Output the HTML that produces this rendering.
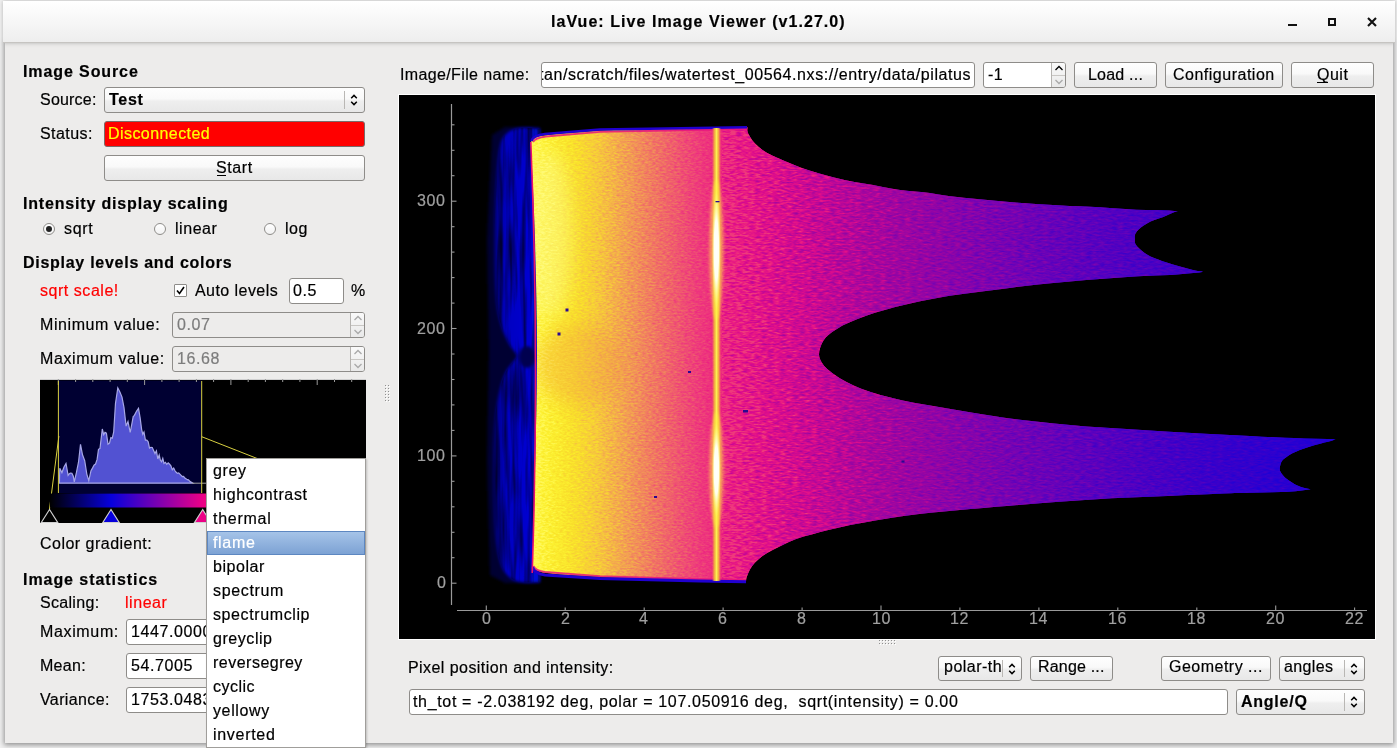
<!DOCTYPE html>
<html><head><meta charset="utf-8">
<style>
*{margin:0;padding:0;box-sizing:border-box}
html,body{width:1397px;height:748px;overflow:hidden;background:#f0f0f0;position:relative}
body{font-family:"Liberation Sans",sans-serif;font-size:15px;color:#000}
.a{position:absolute}
.t{position:absolute;white-space:pre;will-change:transform;-webkit-text-stroke:0.2px currentColor;font-family:"Liberation Sans",sans-serif}
.btn{position:absolute;border:1px solid #8e8c89;border-radius:3px;background:linear-gradient(#fefefe 0%,#f9f9f9 45%,#eeeeee 55%,#e8e8e8 100%)}
.inp{position:absolute;border:1px solid #8e8c89;border-radius:3px;background:#fff}
.dis{background:#edeceb}
</style></head><body>

<div class="a" style="left:5px;top:42px;width:1388px;height:701px;background:#edeceb;box-shadow:0 1px 5px 1px rgba(0,0,0,0.4)"></div>
<div class="a" style="left:3px;top:1px;width:1392px;height:42px;background:linear-gradient(#ffffff,#eeeeee);border-bottom:1px solid #c6c4c1;box-shadow:0 0 4px rgba(0,0,0,0.25)"></div>
<div class="t" style="left:551.0px;top:13.9px;font-size:16.0px;line-height:16.0px;letter-spacing:1.056px;font-weight:bold;">laVue: Live Image Viewer (v1.27.0)</div>
<div class="a" style="left:1288px;top:24px;width:9px;height:2px;background:#111"></div>
<div class="a" style="left:1328px;top:18px;width:8px;height:8px;border:2px solid #111"></div>
<svg class="a" style="left:1367px;top:17px" width="10" height="10" viewBox="0 0 10 10"><path d="M1 1L9 9M9 1L1 9" stroke="#111" stroke-width="2.1"/></svg>
<div class="t" style="left:23.0px;top:63.5px;font-size:16.0px;line-height:16.0px;letter-spacing:0.899px;font-weight:bold;">Image Source</div>
<div class="t" style="left:40.0px;top:91.5px;font-size:16.0px;line-height:16.0px;letter-spacing:0.205px;">Source:</div>
<div class="btn" style="left:104px;top:87px;width:261px;height:26px;"></div>
<div class="a" style="left:344px;top:91px;width:1px;height:18px;background:#b9b7b4"></div>
<svg class="a" style="left:350.0px;top:92.0px" width="8" height="16" viewBox="0 0 8 16"><path d="M1.2 6.2 L4 3.4 L6.8 6.2 M1.2 9.8 L4 12.6 L6.8 9.8" fill="none" stroke="#000" stroke-width="1.5"/></svg>
<div class="t" style="left:109.0px;top:91.5px;font-size:16.0px;line-height:16.0px;letter-spacing:0.700px;font-weight:bold;">Test</div>
<div class="t" style="left:40.0px;top:125.5px;font-size:16.0px;line-height:16.0px;letter-spacing:0.435px;">Status:</div>
<div class="inp" style="left:104px;top:121px;width:261px;height:26px;background:#ff0000;border-color:#7a6a6a"></div>
<div class="t" style="left:108.0px;top:125.5px;font-size:16.0px;line-height:16.0px;letter-spacing:0.428px;color:#ffff00;">Disconnected</div>
<div class="btn" style="left:104px;top:155px;width:261px;height:26px;"></div>
<div class="t" style="left:216.2px;top:159.5px;font-size:16.0px;line-height:16.0px;letter-spacing:0.571px;">Start</div>
<div class="a" style="left:217px;top:175px;width:9px;height:1px;background:#000"></div>
<div class="t" style="left:23.0px;top:195.5px;font-size:16.0px;line-height:16.0px;letter-spacing:0.823px;font-weight:bold;">Intensity display scaling</div>
<div class="a" style="left:42.5px;top:223px;width:12px;height:12px;border-radius:50%;border:1px solid #8e8c89;background:linear-gradient(#fff,#f2f2f2)"></div>
<div class="a" style="left:45.5px;top:226px;width:6px;height:6px;border-radius:50%;background:#222"></div>
<div class="t" style="left:64.0px;top:220.5px;font-size:16.0px;line-height:16.0px;letter-spacing:0.678px;">sqrt</div>
<div class="a" style="left:153.5px;top:223px;width:12px;height:12px;border-radius:50%;border:1px solid #8e8c89;background:linear-gradient(#fff,#f2f2f2)"></div>
<div class="t" style="left:175.0px;top:220.5px;font-size:16.0px;line-height:16.0px;letter-spacing:0.549px;">linear</div>
<div class="a" style="left:263.5px;top:223px;width:12px;height:12px;border-radius:50%;border:1px solid #8e8c89;background:linear-gradient(#fff,#f2f2f2)"></div>
<div class="t" style="left:285.0px;top:220.5px;font-size:16.0px;line-height:16.0px;letter-spacing:0.505px;">log</div>
<div class="t" style="left:23.0px;top:254.5px;font-size:16.0px;line-height:16.0px;letter-spacing:0.726px;font-weight:bold;">Display levels and colors</div>
<div class="t" style="left:40.0px;top:282.5px;font-size:16.0px;line-height:16.0px;letter-spacing:0.537px;color:#ff0000;">sqrt scale!</div>
<div class="inp" style="left:174px;top:284px;width:13px;height:13px;border-radius:1px"></div>
<svg class="a" style="left:174px;top:284px" width="13" height="13" viewBox="0 0 13 13"><path d="M3 6.5L5.5 9.5L10 3" fill="none" stroke="#000" stroke-width="1.6"/></svg>
<div class="t" style="left:195.0px;top:282.5px;font-size:16.0px;line-height:16.0px;letter-spacing:0.438px;">Auto levels</div>
<div class="inp" style="left:289px;top:278px;width:55px;height:26px;"></div>
<div class="t" style="left:293.0px;top:282.5px;font-size:16.0px;line-height:16.0px;letter-spacing:0.538px;">0.5</div>
<div class="t" style="left:351.0px;top:282.5px;font-size:16.0px;line-height:16.0px;letter-spacing:0.027px;">%</div>
<div class="t" style="left:40.0px;top:316.5px;font-size:16.0px;line-height:16.0px;letter-spacing:0.591px;">Minimum value:</div>
<div class="inp dis" style="left:172px;top:312px;width:193px;height:26px;"></div>
<div class="a" style="left:350px;top:313px;width:14px;height:24px;background:linear-gradient(#fafafa,#e9e9e9);border-left:1px solid #b5b3b0;border-radius:0 2px 2px 0"></div>
<div class="a" style="left:351px;top:325px;width:13px;height:1px;background:#c9c7c4"></div>
<svg class="a" style="left:352.5px;top:312px" width="10" height="26" viewBox="0 0 10 26"><path d="M1.5 8.0 L5 4.5 L8.5 8.0" fill="none" stroke="#a9a9a9" stroke-width="1.3"/><path d="M1.5 18.0 L5 21.5 L8.5 18.0" fill="none" stroke="#a9a9a9" stroke-width="1.3"/></svg>
<div class="t" style="left:177.0px;top:316.5px;font-size:16.0px;line-height:16.0px;letter-spacing:0.564px;color:#7c7c7c;">0.07</div>
<div class="t" style="left:40.0px;top:350.5px;font-size:16.0px;line-height:16.0px;letter-spacing:0.588px;">Maximum value:</div>
<div class="inp dis" style="left:172px;top:346px;width:193px;height:26px;"></div>
<div class="a" style="left:350px;top:347px;width:14px;height:24px;background:linear-gradient(#fafafa,#e9e9e9);border-left:1px solid #b5b3b0;border-radius:0 2px 2px 0"></div>
<div class="a" style="left:351px;top:359px;width:13px;height:1px;background:#c9c7c4"></div>
<svg class="a" style="left:352.5px;top:346px" width="10" height="26" viewBox="0 0 10 26"><path d="M1.5 8.0 L5 4.5 L8.5 8.0" fill="none" stroke="#a9a9a9" stroke-width="1.3"/><path d="M1.5 18.0 L5 21.5 L8.5 18.0" fill="none" stroke="#a9a9a9" stroke-width="1.3"/></svg>
<div class="t" style="left:177.0px;top:350.5px;font-size:16.0px;line-height:16.0px;letter-spacing:0.581px;color:#7c7c7c;">16.68</div>
<div class="t" style="left:40.0px;top:535.5px;font-size:16.0px;line-height:16.0px;letter-spacing:0.482px;">Color gradient:</div>
<div class="t" style="left:23.0px;top:571.5px;font-size:16.0px;line-height:16.0px;letter-spacing:0.938px;font-weight:bold;">Image statistics</div>
<div class="t" style="left:40.0px;top:594.5px;font-size:16.0px;line-height:16.0px;letter-spacing:0.307px;">Scaling:</div>
<div class="t" style="left:125.0px;top:594.5px;font-size:16.0px;line-height:16.0px;letter-spacing:0.549px;color:#ff0000;">linear</div>
<div class="t" style="left:40.0px;top:623.5px;font-size:16.0px;line-height:16.0px;letter-spacing:0.648px;">Maximum:</div>
<div class="inp" style="left:126px;top:619px;width:239px;height:26px;"></div>
<div class="t" style="left:130.5px;top:623.5px;font-size:16.0px;line-height:16.0px;letter-spacing:0.609px;">1447.0000</div>
<div class="t" style="left:40.0px;top:657.5px;font-size:16.0px;line-height:16.0px;letter-spacing:0.291px;">Mean:</div>
<div class="inp" style="left:126px;top:653px;width:239px;height:26px;"></div>
<div class="t" style="left:130.5px;top:657.5px;font-size:16.0px;line-height:16.0px;letter-spacing:0.599px;">54.7005</div>
<div class="t" style="left:40.0px;top:691.5px;font-size:16.0px;line-height:16.0px;letter-spacing:0.383px;">Variance:</div>
<div class="inp" style="left:126px;top:687px;width:239px;height:26px;"></div>
<div class="t" style="left:130.5px;top:691.5px;font-size:16.0px;line-height:16.0px;letter-spacing:0.609px;">1753.0483</div>
<div class="t" style="left:399.5px;top:66.8px;font-size:16.0px;line-height:16.0px;letter-spacing:0.368px;">Image/File name:</div>
<div class="inp" style="left:541px;top:62px;width:434px;height:26px;overflow:hidden"></div>
<div class="a" style="left:542px;top:63px;width:432px;height:24px;overflow:hidden">
<div class="t" style="left:-3.5px;top:3.8px;font-size:16.0px;line-height:16.0px;letter-spacing:0.581px;">tan/scratch/files/watertest_00564.nxs://entry/data/pilatus</div>
</div>
<div class="inp" style="left:983px;top:62px;width:83px;height:26px;"></div>
<div class="a" style="left:1051px;top:63px;width:14px;height:24px;background:linear-gradient(#fafafa,#e9e9e9);border-left:1px solid #b5b3b0;border-radius:0 2px 2px 0"></div>
<div class="a" style="left:1052px;top:75px;width:13px;height:1px;background:#c9c7c4"></div>
<svg class="a" style="left:1053.5px;top:62px" width="10" height="26" viewBox="0 0 10 26"><path d="M1.5 8.0 L5 4.5 L8.5 8.0" fill="none" stroke="#000" stroke-width="1.3"/><path d="M1.5 18.0 L5 21.5 L8.5 18.0" fill="none" stroke="#a9a9a9" stroke-width="1.3"/></svg>
<div class="t" style="left:988.0px;top:66.5px;font-size:16.0px;line-height:16.0px;letter-spacing:0.365px;">-1</div>
<div class="btn" style="left:1074px;top:62px;width:83px;height:26px;"></div>
<div class="t" style="left:1088.0px;top:66.5px;font-size:16.0px;line-height:16.0px;letter-spacing:0.210px;">Load ...</div>
<div class="btn" style="left:1165px;top:62px;width:118px;height:26px;"></div>
<div class="t" style="left:1173.1px;top:66.5px;font-size:16.0px;line-height:16.0px;letter-spacing:0.504px;">Configuration</div>
<div class="btn" style="left:1291px;top:62px;width:83px;height:26px;"></div>
<div class="t" style="left:1316.8px;top:66.5px;font-size:16.0px;line-height:16.0px;letter-spacing:0.505px;">Quit</div>
<div class="a" style="left:1317px;top:82px;width:11px;height:1px;background:#000"></div>
<div class="t" style="left:408.3px;top:659.5px;font-size:16.0px;line-height:16.0px;letter-spacing:0.435px;">Pixel position and intensity:</div>
<div class="btn" style="left:938px;top:656px;width:84px;height:25px;"></div>
<div class="a" style="left:1002px;top:660px;width:1px;height:17px;background:#b9b7b4"></div>
<svg class="a" style="left:1007.5px;top:660.5px" width="8" height="16" viewBox="0 0 8 16"><path d="M1.2 6.2 L4 3.4 L6.8 6.2 M1.2 9.8 L4 12.6 L6.8 9.8" fill="none" stroke="#000" stroke-width="1.5"/></svg>
<div class="t" style="left:943.5px;top:659.0px;font-size:16.0px;line-height:16.0px;letter-spacing:0.477px;">polar-th</div>
<div class="btn" style="left:1030px;top:656px;width:83px;height:25px;"></div>
<div class="t" style="left:1038.2px;top:659.0px;font-size:16.0px;line-height:16.0px;letter-spacing:0.187px;">Range ...</div>
<div class="btn" style="left:1161px;top:656px;width:110px;height:25px;"></div>
<div class="t" style="left:1169.1px;top:659.0px;font-size:16.0px;line-height:16.0px;letter-spacing:0.487px;">Geometry ...</div>
<div class="btn" style="left:1279px;top:656px;width:86px;height:25px;"></div>
<div class="a" style="left:1344px;top:660px;width:1px;height:17px;background:#b9b7b4"></div>
<svg class="a" style="left:1350.0px;top:660.5px" width="8" height="16" viewBox="0 0 8 16"><path d="M1.2 6.2 L4 3.4 L6.8 6.2 M1.2 9.8 L4 12.6 L6.8 9.8" fill="none" stroke="#000" stroke-width="1.5"/></svg>
<div class="t" style="left:1284.4px;top:659.0px;font-size:16.0px;line-height:16.0px;letter-spacing:0.380px;">angles</div>
<div class="inp" style="left:409px;top:689px;width:819px;height:26px;"></div>
<div class="t" style="left:413.3px;top:693.5px;font-size:16.0px;line-height:16.0px;letter-spacing:0.660px;">th_tot = -2.038192 deg, polar = 107.050916 deg,  sqrt(intensity) = 0.00</div>
<div class="btn" style="left:1236px;top:689px;width:129px;height:26px;"></div>
<div class="a" style="left:1344px;top:693px;width:1px;height:18px;background:#b9b7b4"></div>
<svg class="a" style="left:1350.0px;top:694.0px" width="8" height="16" viewBox="0 0 8 16"><path d="M1.2 6.2 L4 3.4 L6.8 6.2 M1.2 9.8 L4 12.6 L6.8 9.8" fill="none" stroke="#000" stroke-width="1.5"/></svg>
<div class="t" style="left:1241.4px;top:693.5px;font-size:16.0px;line-height:16.0px;letter-spacing:0.748px;font-weight:bold;">Angle/Q</div>
<div class="a" style="left:398px;top:94px;width:978px;height:546px;background:#fff"></div>
<div class="a" style="left:399px;top:95px;width:976px;height:544px;background:#000"></div>
<svg class="a" style="left:399px;top:95px" width="976" height="544" viewBox="0 0 976 544">
<defs>
<linearGradient id="hg" gradientUnits="userSpaceOnUse" x1="131" y1="0" x2="941" y2="0">
<stop offset="0.0000" stop-color="#fff858"/>
<stop offset="0.0247" stop-color="#fcf030"/>
<stop offset="0.0543" stop-color="#f9e02a"/>
<stop offset="0.0840" stop-color="#f6c83c"/>
<stop offset="0.1235" stop-color="#f29a55"/>
<stop offset="0.1667" stop-color="#f06868"/>
<stop offset="0.2099" stop-color="#ee3a7c"/>
<stop offset="0.2469" stop-color="#ec2080"/>
<stop offset="0.3086" stop-color="#dc0c8c"/>
<stop offset="0.3704" stop-color="#c00896"/>
<stop offset="0.4321" stop-color="#a4069e"/>
<stop offset="0.5185" stop-color="#8c04a8"/>
<stop offset="0.5802" stop-color="#7803b2"/>
<stop offset="0.7037" stop-color="#5801be"/>
<stop offset="0.8272" stop-color="#3c00c8"/>
<stop offset="1.0000" stop-color="#2000d4"/>
</linearGradient>
<linearGradient id="hg2" gradientUnits="userSpaceOnUse" x1="131" y1="0" x2="941" y2="0">
<stop offset="0.2099" stop-color="#ee3a7c"/>
<stop offset="0.2469" stop-color="#ec2080"/>
<stop offset="0.3086" stop-color="#dc0c8c"/>
<stop offset="0.3704" stop-color="#c00896"/>
<stop offset="0.4321" stop-color="#a4069e"/>
<stop offset="0.5185" stop-color="#8c04a8"/>
<stop offset="0.5802" stop-color="#7803b2"/>
<stop offset="0.7037" stop-color="#5801be"/>
<stop offset="0.8272" stop-color="#3c00c8"/>
<stop offset="1.0000" stop-color="#2000d4"/>
</linearGradient>
<linearGradient id="bg1" gradientUnits="userSpaceOnUse" x1="87" y1="0" x2="137" y2="0"><stop offset="0.1" stop-color="#000048"/><stop offset="0.22" stop-color="#000090"/><stop offset="0.4" stop-color="#0000c0"/><stop offset="0.75" stop-color="#0004cc"/><stop offset="1" stop-color="#0008d8"/></linearGradient>
<radialGradient id="spot1" cx="0.5" cy="0.5" r="0.5"><stop offset="0" stop-color="#ffffff"/><stop offset="0.5" stop-color="#fffff0"/><stop offset="1" stop-color="#ffff80" stop-opacity="0"/></radialGradient>
<linearGradient id="vl" x1="0" y1="0" x2="1" y2="0"><stop offset="0" stop-color="#f0a040" stop-opacity="0"/><stop offset="0.25" stop-color="#f4b838" stop-opacity="0.85"/><stop offset="0.5" stop-color="#fbf050"/><stop offset="0.75" stop-color="#f4b838" stop-opacity="0.85"/><stop offset="1" stop-color="#f0a040" stop-opacity="0"/></linearGradient>
<filter id="nz" x="0" y="0" width="100%" height="100%" color-interpolation-filters="sRGB"><feTurbulence type="fractalNoise" baseFrequency="0.28 0.6" numOctaves="2" seed="7" result="n"/><feColorMatrix in="n" type="matrix" values="1 0 0 0 0  0 0 0 0 0.5  0 0 0 0 0  0 0 0 0 1" result="m"/><feDisplacementMap in="SourceGraphic" in2="m" scale="70" xChannelSelector="R" yChannelSelector="G"/></filter>
<clipPath id="shp"><polygon points="131.8,48.0 133.5,43.5 141.0,41.0 161.0,38.5 201.0,35.5 251.0,33.8 348.5,32.2 348.4,33.5 348.3,35.4 348.9,37.9 350.6,41.1 353.0,45.0 356.0,48.6 359.5,51.8 363.5,54.9 368.2,57.9 373.7,60.8 379.9,63.6 386.8,66.5 394.1,69.5 402.1,72.7 411.2,75.8 422.1,79.1 434.1,82.3 445.5,85.1 455.5,87.1 464.8,88.6 474.2,90.1 483.8,91.9 493.3,93.7 502.8,95.2 512.6,96.3 522.3,97.1 531.0,98.0 536.7,98.9 541.3,99.8 549.7,101.0 564.6,102.7 583.2,104.6 601.8,106.3 619.4,107.7 637.0,108.9 654.0,110.0 670.5,110.9 686.3,111.6 701.0,112.3 714.2,113.2 726.2,114.0 737.1,114.7 747.1,115.0 755.9,115.1 763.6,115.3 770.1,115.6 775.4,116.0 779.0,116.2 777.6,116.6 775.6,117.1 773.2,118.0 770.4,119.3 767.1,120.8 763.6,122.3 759.7,123.6 755.4,125.0 751.5,126.5 748.0,128.4 744.7,130.4 741.9,132.5 739.6,134.5 737.8,136.6 736.5,138.5 735.9,140.1 735.8,141.7 735.9,143.3 735.8,145.2 735.8,147.2 736.5,149.3 738.2,151.5 740.5,153.8 743.1,156.0 745.6,157.9 748.4,159.7 751.5,161.4 755.1,163.0 759.2,164.6 763.6,166.2 768.5,167.8 773.9,169.4 779.2,171.0 784.7,172.6 790.2,174.0 794.9,175.2 798.7,175.9 801.8,176.2 803.9,176.4 803.7,176.6 803.1,177.0 800.4,177.4 794.3,178.0 786.1,178.8 778.0,179.4 770.7,179.9 763.5,180.3 756.4,180.6 750.4,180.8 744.4,181.0 735.4,181.5 721.4,182.5 704.4,183.7 687.3,185.1 670.8,186.5 654.3,187.9 639.0,189.4 626.0,190.9 614.2,192.5 601.0,194.3 584.9,196.2 567.4,198.4 550.7,200.7 535.5,203.4 521.2,206.3 508.0,209.2 496.3,212.0 485.7,214.9 475.9,217.8 466.5,220.9 457.9,224.2 450.2,227.4 443.5,230.6 437.9,233.9 433.1,237.0 429.4,239.9 426.7,242.6 424.5,245.6 422.6,249.1 421.2,252.8 420.3,256.3 420.0,259.3 420.3,262.0 421.3,264.8 422.9,267.8 425.2,271.0 428.8,274.5 434.2,278.7 440.8,283.2 448.0,287.3 455.2,290.8 462.9,293.9 471.6,296.9 481.5,299.9 492.4,302.8 503.7,305.5 514.9,307.7 526.7,309.7 540.0,311.9 556.0,314.7 573.7,317.8 591.0,320.6 607.2,322.9 623.2,324.9 639.1,326.7 655.2,328.5 671.2,330.1 687.3,331.5 703.3,332.6 719.4,333.5 735.4,334.4 750.7,335.4 766.1,336.4 783.6,337.5 806.2,338.8 830.9,340.1 851.0,341.1 862.4,341.7 869.2,342.0 876.3,342.3 885.6,342.7 895.2,343.1 905.2,343.4 916.7,343.7 928.4,344.0 936.7,344.2 935.7,344.6 934.1,345.3 931.9,346.0 929.0,346.8 925.4,347.6 921.2,348.7 916.1,350.1 910.4,351.8 905.2,353.5 900.8,355.1 896.9,356.7 893.4,358.3 890.4,360.0 887.9,361.7 885.9,363.2 884.5,364.3 883.5,365.3 882.7,366.4 882.0,367.8 881.5,369.4 881.1,371.0 880.8,372.6 880.7,374.2 881.1,376.0 882.2,378.1 883.9,380.3 885.9,382.4 888.2,384.3 890.7,386.1 893.4,387.8 896.1,389.4 899.0,390.8 902.0,392.0 905.5,393.0 909.1,393.7 911.6,394.2 908.0,394.8 902.8,395.6 896.6,396.3 889.7,396.7 881.9,397.0 873.1,397.2 862.5,397.5 850.9,397.8 841.0,398.0 835.7,398.1 832.2,398.2 824.3,398.5 808.6,399.2 788.5,400.1 768.5,401.0 749.9,401.7 731.3,402.4 712.7,403.3 693.7,404.4 674.7,405.7 656.8,407.0 640.6,408.2 625.4,409.5 611.0,410.7 597.4,411.8 584.5,413.0 571.5,414.1 558.2,415.2 544.8,416.4 531.4,417.7 518.1,419.3 504.7,421.1 491.4,423.1 477.7,425.3 463.9,427.7 451.3,430.1 440.3,432.4 430.4,434.8 421.2,437.1 412.6,439.4 404.6,441.6 397.1,444.1 389.9,447.0 383.2,450.2 377.1,453.2 371.8,455.9 367.3,458.4 363.1,461.2 359.3,464.4 355.8,467.8 353.0,471.2 350.8,474.7 349.2,478.2 348.0,481.2 347.3,483.5 347.1,485.3 347.0,486.5 301.0,485.5 251.0,484.0 201.0,482.0 161.0,479.5 144.0,477.5 136.5,475.0 133.4,471.0 133.9,454.2 134.6,430.2 135.3,402.6 136.0,375.0 136.6,347.6 137.3,318.7 137.8,289.2 138.0,260.0 137.8,230.8 137.4,201.4 136.7,172.5 136.0,145.0 135.0,117.2 133.8,89.3 132.6,65.0"/></clipPath>
<filter id="nz3" x="0" y="0" width="100%" height="100%" color-interpolation-filters="sRGB"><feTurbulence type="fractalNoise" baseFrequency="0.5 0.5" numOctaves="1" seed="11" result="n"/><feColorMatrix in="n" type="matrix" values="0 0 0 0 0  0 0 0 0 0  0 0 0 0 0  3 0 0 0 -0.9" result="m"/><feComposite in="SourceGraphic" in2="m" operator="in"/></filter>
<filter id="nzr" x="0" y="0" width="100%" height="100%" color-interpolation-filters="sRGB"><feTurbulence type="fractalNoise" baseFrequency="0.16 0.55" numOctaves="2" seed="21" result="n"/><feColorMatrix in="n" type="matrix" values="1 0 0 0 0  0 0 0 0 0.5  0 0 0 0 0  0 0 0 0 1" result="m"/><feDisplacementMap in="SourceGraphic" in2="m" scale="280" xChannelSelector="R" yChannelSelector="G"/></filter>
<clipPath id="rgt"><rect x="323" y="0" width="976" height="544"/></clipPath>
</defs>
<filter id="bl3" x="-50%" y="-10%" width="200%" height="120%"><feGaussianBlur stdDeviation="1.6"/></filter>
<filter id="nz2" x="0" y="0" width="100%" height="100%" color-interpolation-filters="sRGB"><feTurbulence type="fractalNoise" baseFrequency="0.22 0.015" numOctaves="2" seed="3" result="n"/><feColorMatrix in="n" type="matrix" values="0 0 0 0 0  0 0 0 0 0  0 0 0 0 0  -2.0 0 0 0 1.25"/></filter>
<clipPath id="lobe"><polygon points="141.0,34.0 137.3,33.7 131.9,33.1 126.0,32.8 121.0,33.0 116.9,33.8 113.2,34.9 109.9,36.6 107.0,39.0 104.7,41.5 102.9,44.2 101.4,48.4 100.0,55.0 98.7,65.1 97.6,77.9 96.7,91.7 96.0,105.0 95.5,117.5 95.1,130.0 95.0,142.5 95.0,155.0 95.2,168.1 95.6,181.6 96.2,194.3 97.0,205.0 98.0,213.2 99.2,219.6 100.5,224.9 102.0,230.0 103.6,235.0 105.4,239.5 107.3,243.5 109.0,247.0 110.6,249.9 112.2,252.2 113.7,254.2 115.0,256.0 116.1,257.5 117.1,258.8 117.7,259.8 118.0,261.0 117.8,262.2 117.1,263.2 116.2,264.5 115.0,266.0 113.5,267.8 111.7,269.9 109.8,272.2 108.0,275.0 106.4,278.1 104.9,281.5 103.4,285.4 102.0,290.0 100.6,295.2 99.3,300.9 98.1,307.5 97.0,315.0 96.0,323.2 95.1,332.2 94.4,342.5 94.0,355.0 93.9,371.1 94.0,390.1 94.4,409.0 95.0,425.0 95.9,437.2 97.1,447.3 98.4,455.7 100.0,463.0 101.7,469.0 103.5,473.4 105.6,476.9 108.0,480.0 110.7,482.6 113.8,484.6 117.1,486.0 121.0,487.0 126.0,487.5 131.8,487.4 137.2,487.2 141.0,487.0"/></clipPath>
<polygon points="141.0,32.0 106.0,32.0 93.0,40.0 88.0,145.0 90.0,255.0 88.0,365.0 91.0,480.0 106.0,488.0 141.0,488.0" fill="#000030" filter="url(#bl3)"/>
<polygon points="141.0,34.0 137.3,33.7 131.9,33.1 126.0,32.8 121.0,33.0 116.9,33.8 113.2,34.9 109.9,36.6 107.0,39.0 104.7,41.5 102.9,44.2 101.4,48.4 100.0,55.0 98.7,65.1 97.6,77.9 96.7,91.7 96.0,105.0 95.5,117.5 95.1,130.0 95.0,142.5 95.0,155.0 95.2,168.1 95.6,181.6 96.2,194.3 97.0,205.0 98.0,213.2 99.2,219.6 100.5,224.9 102.0,230.0 103.6,235.0 105.4,239.5 107.3,243.5 109.0,247.0 110.6,249.9 112.2,252.2 113.7,254.2 115.0,256.0 116.1,257.5 117.1,258.8 117.7,259.8 118.0,261.0 117.8,262.2 117.1,263.2 116.2,264.5 115.0,266.0 113.5,267.8 111.7,269.9 109.8,272.2 108.0,275.0 106.4,278.1 104.9,281.5 103.4,285.4 102.0,290.0 100.6,295.2 99.3,300.9 98.1,307.5 97.0,315.0 96.0,323.2 95.1,332.2 94.4,342.5 94.0,355.0 93.9,371.1 94.0,390.1 94.4,409.0 95.0,425.0 95.9,437.2 97.1,447.3 98.4,455.7 100.0,463.0 101.7,469.0 103.5,473.4 105.6,476.9 108.0,480.0 110.7,482.6 113.8,484.6 117.1,486.0 121.0,487.0 126.0,487.5 131.8,487.4 137.2,487.2 141.0,487.0" fill="url(#bg1)" filter="url(#bl3)"/>
<g clip-path="url(#lobe)"><rect x="87" y="31" width="54" height="457" fill="#000040" filter="url(#nz2)" opacity="0.7"/></g>
<ellipse cx="128" cy="262" rx="8" ry="11" fill="#000050" filter="url(#bl3)"/>
<g clip-path="url(#shp)"><rect x="0" y="20" width="976" height="500" fill="url(#hg)" filter="url(#nz)"/><g clip-path="url(#rgt)"><rect x="161" y="20" width="976" height="500" fill="url(#hg2)" filter="url(#nzr)"/></g></g>
<path d="M134 47 Q136 43 147 41.5 L201 36.80000000000001 L348 34" stroke="#e8147e" stroke-width="1.8" fill="none" opacity="0.85"/>
<path d="M132.5 46 Q134 40.5 146 39 L201 34.5 L348 32.3" stroke="#2000d0" stroke-width="2.4" fill="none"/>
<path d="M134.5 471 Q136 475.5 146 477 L201 481.20000000000005 L301 484.20000000000005 L347 485" stroke="#e8147e" stroke-width="2" fill="none" opacity="0.85"/>
<path d="M133.5 472 Q135 478.5 146 480 L201 483.5 L301 486 L347 486.79999999999995" stroke="#2000d0" stroke-width="3" fill="none"/>
<filter id="bl8" x="-100%" y="-50%" width="300%" height="200%"><feGaussianBlur stdDeviation="9"/></filter>
<g clip-path="url(#shp)">
<ellipse cx="151" cy="140" rx="22" ry="85" fill="#ffffd0" opacity="0.3" filter="url(#bl8)"/>
<ellipse cx="181" cy="270" rx="45" ry="40" fill="#f08050" opacity="0.25" filter="url(#bl8)"/>
</g>
<path d="M131.79999999999995 47 Q140.5 260 133.20000000000005 478" stroke="#e8106e" stroke-width="1.6" fill="none"/>
<rect x="313" y="33" width="9" height="453" fill="url(#vl)"/>
<ellipse cx="317.4" cy="155" rx="7" ry="70" fill="#fff040" opacity="0.55" filter="url(#bl3)"/>
<ellipse cx="317.4" cy="375" rx="7" ry="58" fill="#fff040" opacity="0.55" filter="url(#bl3)"/>
<ellipse cx="317.4" cy="155" rx="4.5" ry="60" fill="url(#spot1)"/>
<ellipse cx="317.4" cy="375" rx="4.5" ry="48" fill="url(#spot1)"/>
<rect x="166.5" y="213.5" width="3" height="3" fill="#2a0890"/>
<rect x="158.5" y="237.5" width="3" height="3" fill="#2a0890"/>
<rect x="344" y="315" width="5" height="2.5" fill="#2a0890"/>
<rect x="289" y="276" width="3" height="2" fill="#2a0890"/>
<rect x="255" y="401" width="3" height="2" fill="#2a0890"/>
<rect x="502.5" y="365.5" width="3" height="2" fill="#2a0890"/>
<rect x="316.5" y="106" width="4" height="1.3" fill="#2a0890"/>
<line x1="52.5" y1="9" x2="52.5" y2="510" stroke="#9a9a9a" stroke-width="1.2"/>
<line x1="52.5" y1="488.2" x2="57.5" y2="488.2" stroke="#9a9a9a" stroke-width="1.1"/>
<line x1="52.5" y1="462.7" x2="55.5" y2="462.7" stroke="#9a9a9a" stroke-width="1.1"/>
<line x1="52.5" y1="437.3" x2="55.5" y2="437.3" stroke="#9a9a9a" stroke-width="1.1"/>
<line x1="52.5" y1="411.8" x2="55.5" y2="411.8" stroke="#9a9a9a" stroke-width="1.1"/>
<line x1="52.5" y1="386.3" x2="55.5" y2="386.3" stroke="#9a9a9a" stroke-width="1.1"/>
<line x1="52.5" y1="360.9" x2="57.5" y2="360.9" stroke="#9a9a9a" stroke-width="1.1"/>
<line x1="52.5" y1="335.4" x2="55.5" y2="335.4" stroke="#9a9a9a" stroke-width="1.1"/>
<line x1="52.5" y1="309.9" x2="55.5" y2="309.9" stroke="#9a9a9a" stroke-width="1.1"/>
<line x1="52.5" y1="284.5" x2="55.5" y2="284.5" stroke="#9a9a9a" stroke-width="1.1"/>
<line x1="52.5" y1="259.0" x2="55.5" y2="259.0" stroke="#9a9a9a" stroke-width="1.1"/>
<line x1="52.5" y1="233.5" x2="57.5" y2="233.5" stroke="#9a9a9a" stroke-width="1.1"/>
<line x1="52.5" y1="208.1" x2="55.5" y2="208.1" stroke="#9a9a9a" stroke-width="1.1"/>
<line x1="52.5" y1="182.6" x2="55.5" y2="182.6" stroke="#9a9a9a" stroke-width="1.1"/>
<line x1="52.5" y1="157.1" x2="55.5" y2="157.1" stroke="#9a9a9a" stroke-width="1.1"/>
<line x1="52.5" y1="131.7" x2="55.5" y2="131.7" stroke="#9a9a9a" stroke-width="1.1"/>
<line x1="52.5" y1="106.2" x2="57.5" y2="106.2" stroke="#9a9a9a" stroke-width="1.1"/>
<line x1="52.5" y1="80.7" x2="55.5" y2="80.7" stroke="#9a9a9a" stroke-width="1.1"/>
<line x1="52.5" y1="55.3" x2="55.5" y2="55.3" stroke="#9a9a9a" stroke-width="1.1"/>
<line x1="52.5" y1="29.8" x2="55.5" y2="29.8" stroke="#9a9a9a" stroke-width="1.1"/>
<line x1="58" y1="515.5" x2="968" y2="515.5" stroke="#9a9a9a" stroke-width="1.2"/>
<line x1="87.3" y1="515.5" x2="87.3" y2="510.5" stroke="#9a9a9a" stroke-width="1.1"/>
<line x1="166.2" y1="515.5" x2="166.2" y2="512.5" stroke="#9a9a9a" stroke-width="1.1"/>
<line x1="245.2" y1="515.5" x2="245.2" y2="512.5" stroke="#9a9a9a" stroke-width="1.1"/>
<line x1="324.1" y1="515.5" x2="324.1" y2="512.5" stroke="#9a9a9a" stroke-width="1.1"/>
<line x1="403.1" y1="515.5" x2="403.1" y2="512.5" stroke="#9a9a9a" stroke-width="1.1"/>
<line x1="482.0" y1="515.5" x2="482.0" y2="510.5" stroke="#9a9a9a" stroke-width="1.1"/>
<line x1="560.9" y1="515.5" x2="560.9" y2="512.5" stroke="#9a9a9a" stroke-width="1.1"/>
<line x1="639.9" y1="515.5" x2="639.9" y2="512.5" stroke="#9a9a9a" stroke-width="1.1"/>
<line x1="718.8" y1="515.5" x2="718.8" y2="512.5" stroke="#9a9a9a" stroke-width="1.1"/>
<line x1="797.8" y1="515.5" x2="797.8" y2="512.5" stroke="#9a9a9a" stroke-width="1.1"/>
<line x1="876.7" y1="515.5" x2="876.7" y2="510.5" stroke="#9a9a9a" stroke-width="1.1"/>
<line x1="955.6" y1="515.5" x2="955.6" y2="512.5" stroke="#9a9a9a" stroke-width="1.1"/>
</svg>
<div class="t" style="left:436.5px;top:575.2px;font-size:16.0px;line-height:16.0px;letter-spacing:0.645px;color:#a0a0a0;">0</div>
<div class="t" style="left:417.4px;top:447.8px;font-size:16.0px;line-height:16.0px;letter-spacing:0.645px;color:#a0a0a0;">100</div>
<div class="t" style="left:417.4px;top:320.5px;font-size:16.0px;line-height:16.0px;letter-spacing:0.645px;color:#a0a0a0;">200</div>
<div class="t" style="left:417.4px;top:193.2px;font-size:16.0px;line-height:16.0px;letter-spacing:0.645px;color:#a0a0a0;">300</div>
<div class="t" style="left:481.5px;top:610.5px;font-size:16.0px;line-height:16.0px;letter-spacing:0.645px;color:#a0a0a0;">0</div>
<div class="t" style="left:560.5px;top:610.5px;font-size:16.0px;line-height:16.0px;letter-spacing:0.645px;color:#a0a0a0;">2</div>
<div class="t" style="left:639.4px;top:610.5px;font-size:16.0px;line-height:16.0px;letter-spacing:0.645px;color:#a0a0a0;">4</div>
<div class="t" style="left:718.3px;top:610.5px;font-size:16.0px;line-height:16.0px;letter-spacing:0.645px;color:#a0a0a0;">6</div>
<div class="t" style="left:797.3px;top:610.5px;font-size:16.0px;line-height:16.0px;letter-spacing:0.645px;color:#a0a0a0;">8</div>
<div class="t" style="left:871.5px;top:610.5px;font-size:16.0px;line-height:16.0px;letter-spacing:0.645px;color:#a0a0a0;">10</div>
<div class="t" style="left:950.4px;top:610.5px;font-size:16.0px;line-height:16.0px;letter-spacing:0.645px;color:#a0a0a0;">12</div>
<div class="t" style="left:1029.3px;top:610.5px;font-size:16.0px;line-height:16.0px;letter-spacing:0.645px;color:#a0a0a0;">14</div>
<div class="t" style="left:1108.3px;top:610.5px;font-size:16.0px;line-height:16.0px;letter-spacing:0.645px;color:#a0a0a0;">16</div>
<div class="t" style="left:1187.2px;top:610.5px;font-size:16.0px;line-height:16.0px;letter-spacing:0.645px;color:#a0a0a0;">18</div>
<div class="t" style="left:1266.2px;top:610.5px;font-size:16.0px;line-height:16.0px;letter-spacing:0.645px;color:#a0a0a0;">20</div>
<div class="t" style="left:1345.1px;top:610.5px;font-size:16.0px;line-height:16.0px;letter-spacing:0.645px;color:#a0a0a0;">22</div>
<div class="a" style="left:386px;top:386px;width:1px;height:1px;background:#ffffff"></div>
<div class="a" style="left:385px;top:385px;width:1px;height:1px;background:#8f8f8f"></div>
<div class="a" style="left:386px;top:389px;width:1px;height:1px;background:#ffffff"></div>
<div class="a" style="left:385px;top:388px;width:1px;height:1px;background:#8f8f8f"></div>
<div class="a" style="left:386px;top:392px;width:1px;height:1px;background:#ffffff"></div>
<div class="a" style="left:385px;top:391px;width:1px;height:1px;background:#8f8f8f"></div>
<div class="a" style="left:386px;top:395px;width:1px;height:1px;background:#ffffff"></div>
<div class="a" style="left:385px;top:394px;width:1px;height:1px;background:#8f8f8f"></div>
<div class="a" style="left:386px;top:398px;width:1px;height:1px;background:#ffffff"></div>
<div class="a" style="left:385px;top:397px;width:1px;height:1px;background:#8f8f8f"></div>
<div class="a" style="left:386px;top:401px;width:1px;height:1px;background:#ffffff"></div>
<div class="a" style="left:385px;top:400px;width:1px;height:1px;background:#8f8f8f"></div>
<div class="a" style="left:389px;top:386px;width:1px;height:1px;background:#ffffff"></div>
<div class="a" style="left:388px;top:385px;width:1px;height:1px;background:#8f8f8f"></div>
<div class="a" style="left:389px;top:389px;width:1px;height:1px;background:#ffffff"></div>
<div class="a" style="left:388px;top:388px;width:1px;height:1px;background:#8f8f8f"></div>
<div class="a" style="left:389px;top:392px;width:1px;height:1px;background:#ffffff"></div>
<div class="a" style="left:388px;top:391px;width:1px;height:1px;background:#8f8f8f"></div>
<div class="a" style="left:389px;top:395px;width:1px;height:1px;background:#ffffff"></div>
<div class="a" style="left:388px;top:394px;width:1px;height:1px;background:#8f8f8f"></div>
<div class="a" style="left:389px;top:398px;width:1px;height:1px;background:#ffffff"></div>
<div class="a" style="left:388px;top:397px;width:1px;height:1px;background:#8f8f8f"></div>
<div class="a" style="left:389px;top:401px;width:1px;height:1px;background:#ffffff"></div>
<div class="a" style="left:388px;top:400px;width:1px;height:1px;background:#8f8f8f"></div>
<div class="a" style="left:880px;top:641px;width:1px;height:1px;background:#ffffff"></div>
<div class="a" style="left:879px;top:640px;width:1px;height:1px;background:#8f8f8f"></div>
<div class="a" style="left:880px;top:644px;width:1px;height:1px;background:#ffffff"></div>
<div class="a" style="left:879px;top:643px;width:1px;height:1px;background:#8f8f8f"></div>
<div class="a" style="left:883px;top:641px;width:1px;height:1px;background:#ffffff"></div>
<div class="a" style="left:882px;top:640px;width:1px;height:1px;background:#8f8f8f"></div>
<div class="a" style="left:883px;top:644px;width:1px;height:1px;background:#ffffff"></div>
<div class="a" style="left:882px;top:643px;width:1px;height:1px;background:#8f8f8f"></div>
<div class="a" style="left:886px;top:641px;width:1px;height:1px;background:#ffffff"></div>
<div class="a" style="left:885px;top:640px;width:1px;height:1px;background:#8f8f8f"></div>
<div class="a" style="left:886px;top:644px;width:1px;height:1px;background:#ffffff"></div>
<div class="a" style="left:885px;top:643px;width:1px;height:1px;background:#8f8f8f"></div>
<div class="a" style="left:889px;top:641px;width:1px;height:1px;background:#ffffff"></div>
<div class="a" style="left:888px;top:640px;width:1px;height:1px;background:#8f8f8f"></div>
<div class="a" style="left:889px;top:644px;width:1px;height:1px;background:#ffffff"></div>
<div class="a" style="left:888px;top:643px;width:1px;height:1px;background:#8f8f8f"></div>
<div class="a" style="left:892px;top:641px;width:1px;height:1px;background:#ffffff"></div>
<div class="a" style="left:891px;top:640px;width:1px;height:1px;background:#8f8f8f"></div>
<div class="a" style="left:892px;top:644px;width:1px;height:1px;background:#ffffff"></div>
<div class="a" style="left:891px;top:643px;width:1px;height:1px;background:#8f8f8f"></div>
<div class="a" style="left:895px;top:641px;width:1px;height:1px;background:#ffffff"></div>
<div class="a" style="left:894px;top:640px;width:1px;height:1px;background:#8f8f8f"></div>
<div class="a" style="left:895px;top:644px;width:1px;height:1px;background:#ffffff"></div>
<div class="a" style="left:894px;top:643px;width:1px;height:1px;background:#8f8f8f"></div>
<svg class="a" style="left:40px;top:379px" width="326" height="144" viewBox="0 0 326 144">
<defs><linearGradient id="fl" x1="0" y1="0" x2="1" y2="0"><stop offset="0" stop-color="#000000"/><stop offset="0.2" stop-color="#0700dc"/><stop offset="0.5" stop-color="#ec0086"/><stop offset="0.8" stop-color="#f6f600"/><stop offset="1" stop-color="#ffffff"/></linearGradient></defs>
<rect x="0" y="0" width="326" height="144" fill="#000"/>
<rect x="18.4" y="1.5" width="143.29999999999998" height="112.5" fill="#000032"/>
<polygon points="19.4,104.2 19.8,89.2 21.9,93.6 24.0,88.0 26.0,84.5 28.1,96.3 29.3,94.8 30.5,94.1 31.9,94.2 33.3,97.3 34.3,102.8 36.4,93.7 38.5,83.2 40.5,65.4 42.5,75.8 44.7,81.7 46.8,95.1 48.8,101.6 51.0,91.7 52.5,89.1 54.0,86.2 55.5,85.1 57.1,80.4 58.5,70.3 60.0,69.4 62.3,50.0 63.7,55.6 65.0,53.4 66.4,54.1 68.0,65.2 69.5,64.1 70.9,58.6 72.3,59.2 73.7,52.8 75.5,24.3 77.8,9.0 80.0,13.3 82.0,18.1 84.0,28.6 86.1,47.1 88.0,42.5 90.2,53.5 92.0,44.1 93.2,37.6 94.4,36.3 96.5,32.3 98.5,29.4 100.1,38.6 101.6,50.3 102.8,55.3 104.0,53.0 105.4,61.1 106.8,61.0 108.2,62.8 109.5,69.0 110.9,68.3 112.3,68.5 113.6,71.4 115.0,74.5 116.4,71.8 117.8,80.0 119.2,75.9 120.4,81.3 121.6,82.8 122.8,79.4 124.0,84.5 125.4,83.4 126.8,85.4 128.2,83.9 129.6,85.2 130.9,86.8 132.3,90.7 133.7,89.0 135.0,91.8 136.2,93.3 137.4,94.4 138.7,93.9 139.9,95.1 141.1,96.3 142.3,97.5 143.6,97.3 144.8,99.0 146.0,99.8 147.3,100.7 148.5,100.8 149.8,102.3 151.0,102.9 152.3,103.7 153.0,104.2" fill="#5252d2" stroke="#a6a6e6" stroke-width="1.2"/>
<line x1="152" y1="104.19999999999999" x2="326" y2="104.19999999999999" stroke="#a0a0a0" stroke-width="1"/>
<line x1="0" y1="0.5" x2="326" y2="0.5" stroke="#d0d0d0" stroke-width="1"/>
<line x1="18.3" y1="0" x2="18.3" y2="6" stroke="#9a9a9a" stroke-width="1"/>
<line x1="35.6" y1="0" x2="35.6" y2="3" stroke="#9a9a9a" stroke-width="1"/>
<line x1="52.8" y1="0" x2="52.8" y2="3" stroke="#9a9a9a" stroke-width="1"/>
<line x1="70.1" y1="0" x2="70.1" y2="3" stroke="#9a9a9a" stroke-width="1"/>
<line x1="87.3" y1="0" x2="87.3" y2="3" stroke="#9a9a9a" stroke-width="1"/>
<line x1="104.6" y1="0" x2="104.6" y2="6" stroke="#9a9a9a" stroke-width="1"/>
<line x1="121.9" y1="0" x2="121.9" y2="3" stroke="#9a9a9a" stroke-width="1"/>
<line x1="139.1" y1="0" x2="139.1" y2="3" stroke="#9a9a9a" stroke-width="1"/>
<line x1="156.4" y1="0" x2="156.4" y2="3" stroke="#9a9a9a" stroke-width="1"/>
<line x1="173.6" y1="0" x2="173.6" y2="3" stroke="#9a9a9a" stroke-width="1"/>
<line x1="190.9" y1="0" x2="190.9" y2="6" stroke="#9a9a9a" stroke-width="1"/>
<line x1="208.2" y1="0" x2="208.2" y2="3" stroke="#9a9a9a" stroke-width="1"/>
<line x1="225.4" y1="0" x2="225.4" y2="3" stroke="#9a9a9a" stroke-width="1"/>
<line x1="242.7" y1="0" x2="242.7" y2="3" stroke="#9a9a9a" stroke-width="1"/>
<line x1="259.9" y1="0" x2="259.9" y2="3" stroke="#9a9a9a" stroke-width="1"/>
<line x1="277.2" y1="0" x2="277.2" y2="6" stroke="#9a9a9a" stroke-width="1"/>
<line x1="294.5" y1="0" x2="294.5" y2="3" stroke="#9a9a9a" stroke-width="1"/>
<line x1="311.7" y1="0" x2="311.7" y2="3" stroke="#9a9a9a" stroke-width="1"/>
<line x1="18.4" y1="2" x2="18.4" y2="114" stroke="#d8d040" stroke-width="1"/>
<line x1="161.7" y1="2" x2="161.7" y2="114" stroke="#d8d040" stroke-width="1"/>
<line x1="9.5" y1="130" x2="18.9" y2="57" stroke="#d8d040" stroke-width="1"/>
<line x1="161.7" y1="57.69999999999999" x2="305" y2="114" stroke="#d8d040" stroke-width="1"/>
<rect x="10" y="114.5" width="306" height="14" fill="url(#fl)"/>
<polygon points="1.3000000000000007,143.5 9.5,130.5 17.7,143.5" fill="#000000" stroke="#d0d0d0" stroke-width="1.2"/>
<polygon points="62.8,143.5 71,130.5 79.2,143.5" fill="#0700dc" stroke="#d0d0d0" stroke-width="1.2"/>
<polygon points="154.5,143.5 162.7,130.5 170.89999999999998,143.5" fill="#ec0086" stroke="#d0d0d0" stroke-width="1.2"/>
<polygon points="246.8,143.5 255,130.5 263.2,143.5" fill="#f6f600" stroke="#d0d0d0" stroke-width="1.2"/>
<polygon points="307.8,143.5 316,130.5 324.2,143.5" fill="#ffffff" stroke="#d0d0d0" stroke-width="1.2"/>
</svg>
<div class="a" style="left:206px;top:458px;width:160px;height:290px;background:#fff;border:1px solid #a09e9b;box-shadow:1px 1px 2px rgba(0,0,0,0.2)"></div>
<div class="a" style="left:207px;top:531px;width:158px;height:24px;background:linear-gradient(#a5c3e8,#7da2d4);border:1px solid #5d87c1"></div>
<div class="t" style="left:213.0px;top:462.5px;font-size:16.0px;line-height:16.0px;letter-spacing:0.585px;">grey</div>
<div class="t" style="left:213.0px;top:486.5px;font-size:16.0px;line-height:16.0px;letter-spacing:0.617px;">highcontrast</div>
<div class="t" style="left:213.0px;top:510.5px;font-size:16.0px;line-height:16.0px;letter-spacing:0.734px;">thermal</div>
<div class="t" style="left:213.0px;top:534.5px;font-size:16.0px;line-height:16.0px;letter-spacing:0.671px;color:#ffffff;">flame</div>
<div class="t" style="left:213.0px;top:558.5px;font-size:16.0px;line-height:16.0px;letter-spacing:0.555px;">bipolar</div>
<div class="t" style="left:213.0px;top:582.5px;font-size:16.0px;line-height:16.0px;letter-spacing:0.648px;">spectrum</div>
<div class="t" style="left:213.0px;top:606.5px;font-size:16.0px;line-height:16.0px;letter-spacing:0.606px;">spectrumclip</div>
<div class="t" style="left:213.0px;top:630.5px;font-size:16.0px;line-height:16.0px;letter-spacing:0.554px;">greyclip</div>
<div class="t" style="left:213.0px;top:654.5px;font-size:16.0px;line-height:16.0px;letter-spacing:0.488px;">reversegrey</div>
<div class="t" style="left:213.0px;top:678.5px;font-size:16.0px;line-height:16.0px;letter-spacing:0.474px;">cyclic</div>
<div class="t" style="left:213.0px;top:702.5px;font-size:16.0px;line-height:16.0px;letter-spacing:0.614px;">yellowy</div>
<div class="t" style="left:213.0px;top:726.5px;font-size:16.0px;line-height:16.0px;letter-spacing:0.707px;">inverted</div>
</body></html>
